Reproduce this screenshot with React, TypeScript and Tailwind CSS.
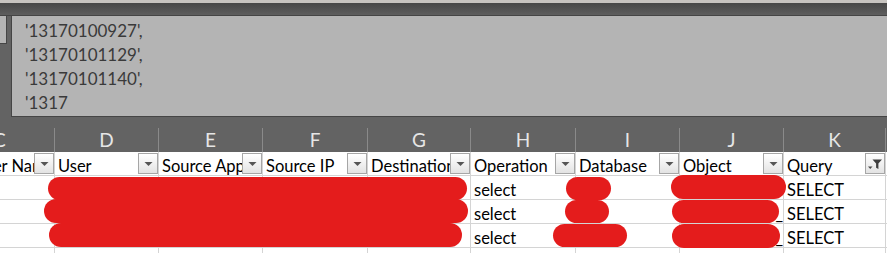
import React from 'react';

const font = { fontFamily: 'Lato, "Open Sans", sans-serif' };

// column widths, starting with the clipped C column
const cols = [
  { letter: 'C', w: 'w-[55px]', label: 'User Name', shift: '-ml-[29px]' },
  { letter: 'D', w: 'w-[104px]', label: 'User' },
  { letter: 'E', w: 'w-[104px]', label: 'Source Application' },
  { letter: 'F', w: 'w-[105px]', label: 'Source IP' },
  { letter: 'G', w: 'w-[103px]', label: 'Destination IP' },
  { letter: 'H', w: 'w-[105px]', label: 'Operation' },
  { letter: 'I', w: 'w-[104px]', label: 'Database' },
  { letter: 'J', w: 'w-[104px]', label: 'Object' },
  { letter: 'K', w: 'w-[102px]', label: 'Query', funnel: true },
  { letter: 'L', w: 'w-[104px]', label: '' },
];

const rows = [
  { h: 'select', j: '', k: 'SELECT' },
  { h: 'select', j: '_', k: 'SELECT' },
  { h: 'select', j: '_', k: 'SELECT' },
  { h: '', j: '', k: '' },
];

const FilterButton: React.FC<{ funnel?: boolean }> = ({ funnel }) => (
  <div className="shrink-0 self-end mb-[1px] w-[20px] h-[21px] border border-[#a6a6a6] bg-gradient-to-b from-white to-[#e3e3e3] flex items-center justify-center">
    {funnel ? (
      <svg width="16" height="14" viewBox="0 0 16 14">
        <path d="M1 9.5h4.5l-2.25 2.5z" fill="#4a4a4a" />
        <path d="M5.5 2.5h9.5l-3.6 4v5.5l-2.3-1.3V6.5z" fill="#3f3f3f" />
      </svg>
    ) : (
      <svg width="9" height="6" viewBox="0 0 9 6" className="mt-[1px]">
        <path d="M0.5 1h8L4.5 5z" fill="#555" />
      </svg>
    )}
  </div>
);

const App: React.FC = () => {
  return (
    <div className="w-[887px] h-[253px] overflow-hidden bg-[#636363] relative" style={font}>
      {/* Top edge */}
      <div className="h-[3px] bg-[#c7c4c0]" />
      <div className="h-[12px] bg-gradient-to-b from-[#474747] to-[#5e5e5e]" />

      {/* Formula bar */}
      <div className="flex gap-[4px] h-[102px] border-t border-[#454545]">
        <div className="w-[7px] h-[28px] bg-[#b4b4b4] border-r border-b border-[#454545]" />
        <div className="flex-1 bg-[#b4b4b4] border-l border-b border-[#454545] pl-[13px] pt-[3px] text-[#3a3a3a] text-[17px] leading-[24px]">
          <div>'13170100927',</div>
          <div>'13170101129',</div>
          <div>'13170101140',</div>
          <div>'1317</div>
        </div>
      </div>

      {/* Column letters */}
      <div className="flex mt-[11px] h-[24px]">
        {cols.map((c) => (
          <div
            key={c.letter}
            className={`${c.w} shrink-0 border-r border-[#8a8a8a] flex items-center text-[#e6e6e6] text-[19px] ${c.letter === 'C' ? 'justify-start' : 'justify-center'}`}
          >
            <span className={c.letter === 'C' ? '-ml-[7px]' : ''}>{c.letter}</span>
          </div>
        ))}
      </div>

      {/* Sheet */}
      <div className="bg-white">
        <div className="flex h-[24px] border-b border-[#d4d4d4]">
          {cols.map((c) => (
            <div
              key={c.letter}
              className={`${c.w} shrink-0 border-r border-[#d4d4d4] flex items-start overflow-hidden`}
            >
              {c.label && (
                <>
                  <div className="flex-1 overflow-hidden whitespace-nowrap text-[16.5px] leading-[18px] pt-[5px] text-black pl-[3px]">
                    <span className={c.shift ?? ''}>{c.label}</span>
                  </div>
                  <FilterButton funnel={c.funnel} />
                </>
              )}
            </div>
          ))}
        </div>
        {rows.map((r, i) => (
          <div key={i} className="flex h-[24px] border-b border-[#d4d4d4]">
            {cols.map((c) => (
              <div
                key={c.letter}
                className={`${c.w} shrink-0 border-r border-[#d4d4d4] flex items-start pt-[5px] pl-[3px] whitespace-nowrap overflow-hidden text-[16.5px] leading-[18px] text-black`}
              >
                {c.letter === 'H' && r.h}
                {c.letter === 'J' && <span className="ml-auto">{r.j}</span>}
                {c.letter === 'K' && r.k}
              </div>
            ))}
          </div>
        ))}
      </div>

      {/* Redactions */}
      <div className="absolute left-[48px] top-[177px] w-[419px] h-[23px] rounded-full bg-[#e41c1c]" />
      <div className="absolute left-[44px] top-[199px] w-[424px] h-[24px] rounded-full bg-[#e41c1c]" />
      <div className="absolute left-[49px] top-[223px] w-[413px] h-[24px] rounded-full bg-[#e41c1c]" />
      <div className="absolute left-[566px] top-[177px] w-[45px] h-[23px] rounded-full bg-[#e41c1c]" />
      <div className="absolute left-[565px] top-[200px] w-[44px] h-[23px] rounded-full bg-[#e41c1c]" />
      <div className="absolute left-[553px] top-[224px] w-[74px] h-[23px] rounded-full bg-[#e41c1c]" />
      <div className="absolute left-[671px] top-[175px] w-[115px] h-[24px] rounded-full bg-[#e41c1c]" />
      <div className="absolute left-[672px] top-[200px] w-[107px] h-[23px] rounded-full bg-[#e41c1c]" />
      <div className="absolute left-[672px] top-[224px] w-[108px] h-[24px] rounded-full bg-[#e41c1c]" />
    </div>
  );
};

export default App;
